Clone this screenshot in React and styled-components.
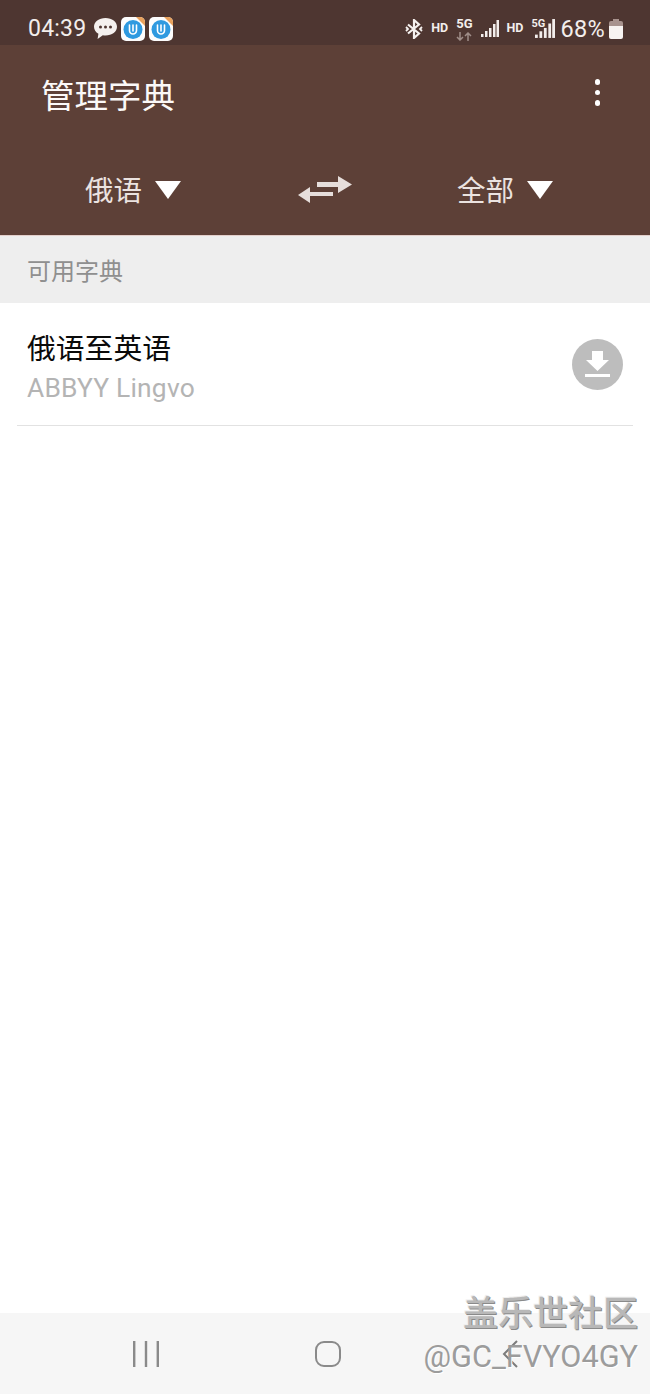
import React from "react"
import styled, { createGlobalStyle } from "styled-components"

const GlobalStyle = createGlobalStyle`
  html, body {
    margin: 0;
    padding: 0;
    background: #fff;
  }
  body {
    font-family: "Roboto", "Noto Sans CJK SC", sans-serif;
  }
`

const Screen = styled.div`
  position: relative;
  width: 650px;
  height: 1394px;
  display: flex;
  flex-direction: column;
  overflow: hidden;
  background: #fff;
`

const StatusBar = styled.div`
  height: 45px;
  box-sizing: border-box;
  padding: 12px 27px 0 28px;
  display: flex;
  align-items: center;
  justify-content: space-between;
  background: #4e3631;
  color: #f3eeec;
`

const StatusGroup = styled.div`
  display: flex;
  align-items: center;
  gap: ${(p) => p.$gap || 0}px;
`

const Clock = styled.span`
  font-size: 23px;
  margin-right: 4px;
  letter-spacing: 0.2px;
`

const Percent = styled.span`
  font-size: 23.5px;
  letter-spacing: 0.3px;
  margin: 0 -4px 0 -3px;
`

const AppBar = styled.div`
  height: 190px;
  box-sizing: border-box;
  background: #5d4037;
  display: flex;
  flex-direction: column;
`

const TitleRow = styled.div`
  height: 100px;
  box-sizing: border-box;
  padding: 0 50px 0 41px;
  display: flex;
  align-items: center;
  justify-content: space-between;
`

const Title = styled.h1`
  margin: -4px 0 0;
  font-size: 33.5px;
  font-weight: 400;
  color: #fbf9f8;
  font-family: "Noto Sans CJK SC", sans-serif;
`

const MenuDots = styled.div`
  display: flex;
  flex-direction: column;
  gap: 5px;
  margin-top: -5px;
`

const Dot = styled.span`
  width: 5.5px;
  height: 5.5px;
  border-radius: 50%;
  background: #fff;
`

const LangRow = styled.div`
  display: grid;
  grid-template-columns: 298px 159px 1fr;
  flex: 1;
`

const LangPicker = styled.div`
  display: flex;
  align-items: center;
  gap: 13px;
  padding-left: ${(p) => p.$left || 0}px;
`

const LangLabel = styled.span`
  font-size: 28.5px;
  margin-top: -4px;
  color: #ebe3e0;
  font-family: "Noto Sans CJK SC", sans-serif;
`

const SectionHead = styled.div`
  height: 68px;
  box-sizing: border-box;
  padding-left: 27px;
  display: flex;
  align-items: center;
  background: #eeeeee;
  border-top: 1px solid #e3cfcb;
  font-size: 24px;
  color: #8f8f8f;
  font-family: "Noto Sans CJK SC", sans-serif;
`

const DictRow = styled.div`
  height: 122px;
  margin: 0 17px;
  box-sizing: content-box;
  padding: 0 10px 0 11px;
  display: flex;
  align-items: center;
  justify-content: space-between;
  border-bottom: 1px solid #e2e2e2;
`

const DictText = styled.div`
  display: flex;
  flex-direction: column;
  margin-top: 8px;
`

const DictName = styled.span`
  font-size: 28.8px;
  line-height: 38px;
  margin: 0 0 2px -1px;
  color: #0a0a0a;
  font-family: "Noto Sans CJK SC", sans-serif;
`

const DictSource = styled.span`
  font-size: 26.4px;
  line-height: 40px;
  margin-left: -1px;
  color: #b4b4b4;
  letter-spacing: 0.2px;
`

const Spacer = styled.div`
  flex: 1;
`

const NavBar = styled.div`
  height: 81px;
  background: #f6f6f6;
  display: flex;
  align-items: center;
  box-sizing: border-box;
`

const NavSlot = styled.div`
  width: ${(p) => p.$width}px;
  box-sizing: border-box;
  padding-left: ${(p) => p.$left || 0}px;
  display: flex;
  justify-content: center;
`

const Watermark = styled.div`
  position: absolute;
  right: 12px;
  top: 1290px;
  display: flex;
  flex-direction: column;
  align-items: flex-end;
`

const WatermarkTitle = styled.span`
  font-size: 35px;
  line-height: 42px;
  font-weight: 500;
  color: #b8b8b8;
  text-shadow: 1px 1px 0 #8a8a8a, -1px -1px 0 #eeeeee;
  font-family: "Noto Sans CJK SC", sans-serif;
`

const WatermarkHandle = styled.span`
  font-size: 30.7px;
  line-height: 50px;
  color: #9c9c9c;
  text-shadow: 1px 1px 0 #ffffff;
`

const TinyLabel = styled.span`
  font-size: ${(p) => p.$size || 13}px;
  font-weight: 700;
  line-height: 1;
  color: #f3eeec;
`

const NetStack = styled.div`
  display: flex;
  flex-direction: column;
  align-items: center;
  gap: 2px;
`

const SignalWrap = styled.div`
  position: relative;
  width: 24px;
  height: 19px;
  display: flex;
  justify-content: flex-end;
`

const SignalTag = styled(TinyLabel)`
  position: absolute;
  left: 0;
  top: -1px;
  font-size: 11px;
`

const ChatIcon = () => (
  <svg width="23" height="21" viewBox="0 0 23 21">
    <path fill="#f5f1ef" d="M11.500 0C5 0 0 3.800 0 8.700c0 2.900 1.700 5.400 4.400 7L3.600 21l5.200-3.700c.9.200 1.800.2 2.700.2 6.500 0 11.500-3.900 11.500-8.800S18 0 11.500 0z" />
    <circle cx="6.500" cy="9" r="1.500" fill="#4e3631" />
    <circle cx="11.500" cy="9" r="1.500" fill="#4e3631" />
    <circle cx="16.500" cy="9" r="1.500" fill="#4e3631" />
  </svg>
)

const AppBadge = () => (
  <svg width="24" height="24" viewBox="0 0 24 24">
    <rect x="0" y="0" width="24" height="24" rx="5" fill="#fdfdfd" />
    <path fill="#e8a15c" d="M15 0h4a5 5 0 0 1 5 5v4z" />
    <circle cx="12" cy="12.500" r="9.500" fill="#2f9ae0" />
    <path fill="none" stroke="#fff" strokeWidth="1.600" strokeLinecap="round" d="M8.500 8v5.500a3.500 3.500 0 0 0 7 0V8" />
    <path stroke="#fff" strokeWidth="1.600" strokeLinecap="round" d="M12 8v6" />
  </svg>
)

const BluetoothIcon = () => (
  <svg width="18" height="20" viewBox="0 0 18 20" fill="none" stroke="#f5f1ef" strokeWidth="2.200">
    <path d="M3 5.500l11 9-5 4.500V1l5 4.500-11 9" />
    <path d="M1 8l2 2-2 2M17 8l-2 2 2 2" strokeWidth="1.800" />
  </svg>
)

const ArrowsIcon = () => (
  <svg width="16" height="9" viewBox="0 0 16 9" fill="none" stroke="#9f8d88" strokeWidth="1.500">
    <path d="M4 0v8M1 5l3 3 3-3M12 9V1M9 4l3-3 3 3" />
  </svg>
)

const SignalIcon = ({ w = 18, h = 17 }) => (
  <svg width={w} height={h} viewBox="0 0 18 17" fill="#f3eeec">
    <rect x="0" y="14" width="2.500" height="3" />
    <rect x="4" y="11" width="2.500" height="6" />
    <rect x="8" y="8" width="2.500" height="9" />
    <rect x="12" y="4" width="2.500" height="13" />
    <rect x="15.500" y="0" width="2.500" height="17" />
  </svg>
)

const BatteryIcon = () => (
  <svg width="14" height="20" viewBox="0 0 14 20">
    <path fill="#a8938e" d="M4 0h6v2h2a2 2 0 0 1 2 2v4H0V4a2 2 0 0 1 2-2h2z" />
    <path fill="#f7f3f1" d="M0 7h14v11a2 2 0 0 1-2 2H2a2 2 0 0 1-2-2z" />
  </svg>
)

const Caret = () => (
  <svg width="26" height="18" viewBox="0 0 26 18">
    <path fill="#fff" d="M0 0h26L13 18z" />
  </svg>
)

const SwapIcon = () => (
  <svg width="54" height="28" viewBox="0 0 54 28" fill="#e6dedb">
    <path d="M19 6h21V0l14 8.500L40 17v-6H19z" />
    <path d="M35 16H12v-5L0 19l12 8v-7h23z" />
  </svg>
)

const DownloadIcon = () => (
  <svg width="51" height="51" viewBox="0 0 51 51">
    <circle cx="25.500" cy="25.500" r="25.500" fill="#bdbdbd" />
    <path fill="#fff" d="M20 12h11v9h6L25.500 32 14 21h6z" />
    <rect x="13" y="35" width="25" height="3" fill="#fff" />
  </svg>
)

const RecentsIcon = () => (
  <svg width="26" height="26" viewBox="0 0 26 26" fill="#8a8a8a">
    <rect x="0" y="0" width="2.400" height="26" />
    <rect x="11.800" y="0" width="2.400" height="26" />
    <rect x="23.600" y="0" width="2.400" height="26" />
  </svg>
)

const HomeIcon = () => (
  <svg width="26" height="26" viewBox="0 0 26 26" fill="none" stroke="#8a8a8a" strokeWidth="2">
    <rect x="1" y="1" width="24" height="24" rx="8" />
  </svg>
)

const BackIcon = () => (
  <svg width="16" height="28" viewBox="0 0 16 28" fill="none" stroke="#7c7c7c" strokeWidth="2">
    <path d="M15 1L2 14l13 13" />
  </svg>
)

const App = () => (
  <Screen>
    <GlobalStyle />
    <StatusBar>
      <StatusGroup $gap={4}>
        <Clock>04:39</Clock>
        <ChatIcon />
        <AppBadge />
        <AppBadge />
      </StatusGroup>
      <StatusGroup $gap={8}>
        <BluetoothIcon />
        <TinyLabel $size={12.500}>HD</TinyLabel>
        <NetStack>
          <TinyLabel>5G</TinyLabel>
          <ArrowsIcon />
        </NetStack>
        <SignalIcon />
        <TinyLabel $size={12.500}>HD</TinyLabel>
        <SignalWrap>
          <SignalTag>5G</SignalTag>
          <SignalIcon w={20} h={19} />
        </SignalWrap>
        <Percent>68%</Percent>
        <BatteryIcon />
      </StatusGroup>
    </StatusBar>
    <AppBar>
      <TitleRow>
        <Title>管理字典</Title>
        <MenuDots>
          <Dot />
          <Dot />
          <Dot />
        </MenuDots>
      </TitleRow>
      <LangRow>
        <LangPicker $left={85}>
          <LangLabel>俄语</LangLabel>
          <Caret />
        </LangPicker>
        <LangPicker>
          <SwapIcon />
        </LangPicker>
        <LangPicker>
          <LangLabel>全部</LangLabel>
          <Caret />
        </LangPicker>
      </LangRow>
    </AppBar>
    <SectionHead>可用字典</SectionHead>
    <DictRow>
      <DictText>
        <DictName>俄语至英语</DictName>
        <DictSource>ABBYY Lingvo</DictSource>
      </DictText>
      <DownloadIcon />
    </DictRow>
    <Spacer />
    <NavBar>
      <NavSlot $width={291}>
        <RecentsIcon />
      </NavSlot>
      <NavSlot $width={74}>
        <HomeIcon />
      </NavSlot>
      <NavSlot $width={285} $left={5}>
        <BackIcon />
      </NavSlot>
    </NavBar>
    <Watermark>
      <WatermarkTitle>盖乐世社区</WatermarkTitle>
      <WatermarkHandle>@GC_FVYO4GY</WatermarkHandle>
    </Watermark>
  </Screen>
)

export default App
